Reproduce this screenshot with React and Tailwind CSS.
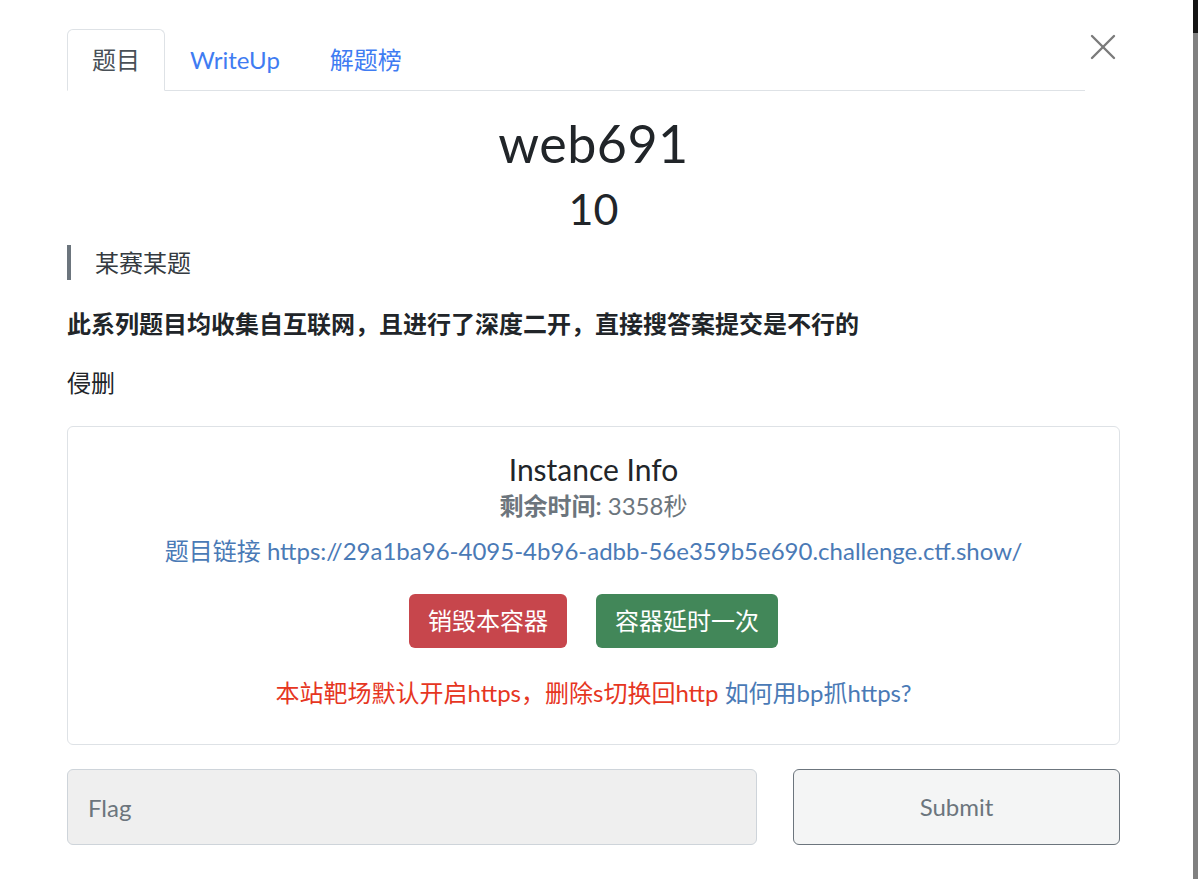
import React, { useState } from 'react';

const font = { fontFamily: '"Lato", "Noto Sans CJK SC", sans-serif' };

function Tabs() {
  const tabs = ['题目', 'WriteUp', '解题榜'];
  return (
    <div className="flex items-start">
      <ul className="flex flex-1 border-b border-[#dee2e6]">
        {tabs.map((t, i) => (
          <li key={t} className="-mb-px">
            <span
              className={
                i === 0
                  ? 'block px-6 py-3 text-[24px] leading-9 text-[#495057] bg-white border border-[#dee2e6] border-b-white rounded-t-md'
                  : 'block px-6 py-3 text-[24px] leading-9 text-[#3f7cf2] border border-transparent'
              }
            >
              {t}
            </span>
          </li>
        ))}
      </ul>
      <button className="w-[35px] flex justify-center mt-[5px]">
        <svg width="26" height="26" viewBox="0 0 26 26" fill="none" stroke="#7b7b7b" strokeWidth="2.4" strokeLinecap="round">
          <line x1="2" y1="2" x2="24" y2="24" />
          <line x1="24" y1="2" x2="2" y2="24" />
        </svg>
      </button>
    </div>
  );
}

function InstanceCard() {
  return (
    <div className="mt-[25px] border border-[#dee2e6] rounded-md pt-6 pb-[33px] text-center">
      <div className="text-[30px] leading-9 text-[#212529]">Instance Info</div>
      <div className="mt-1 text-[24px] leading-[30px] text-[#6c757d]">
        <span className="font-semibold">剩余时间:</span> 3358秒
      </div>
      <div className="mt-3 text-[24px] leading-9 text-[#4a7ab6]">
        题目链接 https://29a1ba96-4095-4b96-adbb-56e359b5e690.challenge.ctf.show/
      </div>
      <div className="mt-[25px] flex justify-center gap-[29px]">
        <button className="h-[54px] px-[19px] rounded-md bg-[#c7464c] text-white text-[24px]">销毁本容器</button>
        <button className="h-[54px] px-[19px] rounded-md bg-[#428759] text-white text-[24px]">容器延时一次</button>
      </div>
      <div className="mt-[27px] text-[24px] leading-9">
        <span className="text-[#e6361f]">本站靶场默认开启https，删除s切换回http</span>{' '}
        <span className="text-[#4a7ab6]">如何用bp抓https?</span>
      </div>
    </div>
  );
}

export default function App() {
  const [flag, setFlag] = useState('');
  return (
    <div className="flex h-[879px] overflow-hidden bg-white" style={font}>
      <div className="flex-1 pl-[67px]">
        <div className="w-[1053px] pt-[29px] text-[#212529]">
          <Tabs />
          <div className="mt-[22px] text-center text-[52px] leading-[60px] tracking-[0.5px]">web691</div>
          <div className="mt-[11px] text-center text-[43px] leading-[50px]">10</div>
          <div className="mt-[11px] border-l-4 border-[#6c757d] pl-6 text-[24px] leading-[35px] text-[#343a40]">某赛某题</div>
          <p className="mt-[26px] text-[24px] leading-9 font-bold">此系列题目均收集自互联网，且进行了深度二开，直接搜答案提交是不行的</p>
          <p className="mt-[23px] text-[24px] leading-9">侵删</p>
          <InstanceCard />
          <div className="mt-6 flex gap-9">
            <input
              value={flag}
              onChange={e => setFlag(e.target.value)}
              placeholder="Flag"
              className="w-[690px] h-[76px] px-5 rounded-md bg-[#efefef] border border-[#ced4da] text-[24px] placeholder:text-[#6c757d] outline-none"
            />
            <button className="flex-1 h-[76px] rounded-md bg-[#f4f5f5] border border-[#6c757d] text-[#6c757d] text-[24px]">
              Submit
            </button>
          </div>
        </div>
      </div>
      <div className="w-[5px] flex flex-col">
        <div className="h-[33px] bg-[#141414]" />
        <div className="flex-1 bg-[#808080]" />
      </div>
    </div>
  );
}
